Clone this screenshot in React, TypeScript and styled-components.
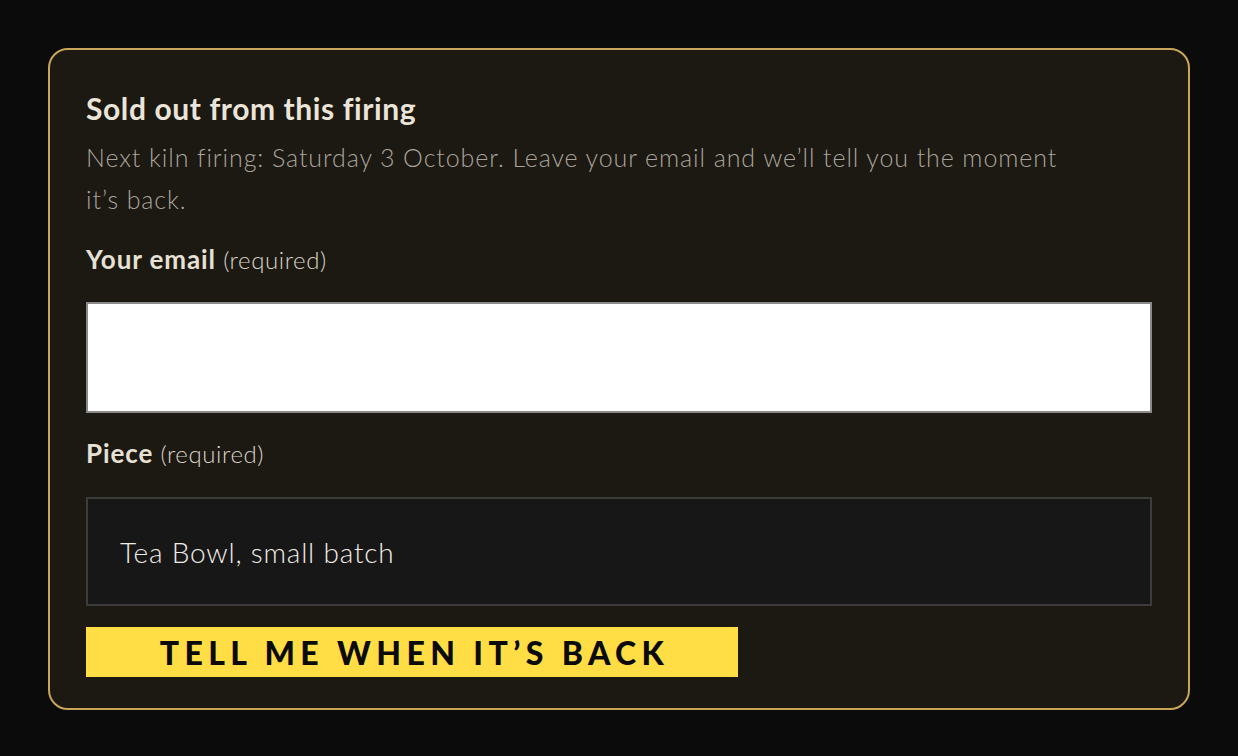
import styled, { createGlobalStyle } from 'styled-components'

const GlobalStyle = createGlobalStyle`
  html, body {
    margin: 0;
    background: #0b0b0b;
  }
  body {
    font-family: Lato, "Open Sans", sans-serif;
  }
`

const Page = styled.div`
  padding: 48px 48px;
  min-height: 756px;
  box-sizing: border-box;
`

const Card = styled.form`
  border: 2px solid #c9a65a;
  border-radius: 20px;
  background: #1c1812;
  padding: 40px 36px 31px;
  display: flex;
  flex-direction: column;
`

const Heading = styled.h2`
  margin: 0;
  font-size: 30px;
  line-height: 36px;
  font-weight: 700;
  letter-spacing: 0.6px;
  color: #ebe5d9;
`

const Lead = styled.p`
  margin: 10px 0 0;
  max-width: 1000px;
  font-size: 25px;
  line-height: 42px;
  font-weight: 300;
  letter-spacing: 0.9px;
  color: #a9a59c;
`

const Label = styled.label<{ $gap: number }>`
  display: block;
  margin-top: ${(p) => p.$gap}px;
  font-size: 26px;
  line-height: 32px;
  font-weight: 700;
  letter-spacing: 0.9px;
  color: #e6e0d5;

  span {
    font-weight: 300;
    font-size: 24px;
    letter-spacing: 0.6px;
    color: #d9d3c8;
  }
`

const EmailInput = styled.input`
  display: block;
  margin-top: 26px;
  width: 100%;
  height: 111px;
  box-sizing: border-box;
  background: #fff;
  border: 2px solid #8a8a8a;
  font: inherit;
  font-size: 24px;
  padding: 0 32px;
  outline: none;
`

const PieceBox = styled.div`
  margin-top: 27px;
  height: 109px;
  box-sizing: border-box;
  background: #171717;
  border: 2px solid #3c3c3c;
  display: flex;
  align-items: center;
  padding: 0 32px;
  font-size: 28px;
  font-weight: 300;
  letter-spacing: 0.8px;
  color: #f0ede6;
`

const Submit = styled.button`
  margin-top: 21px;
  width: 652px;
  height: 50px;
  border: none;
  background: #ffde45;
  color: #0b0b0b;
  font-family: Lato, sans-serif;
  font-size: 32px;
  font-weight: 900;
  letter-spacing: 5.4px;
  text-transform: uppercase;
  cursor: pointer;
  padding: 0 0 0 5px;
`

export default function App() {
  return (
    <Page>
      <GlobalStyle />
      <Card onSubmit={(e) => e.preventDefault()}>
        <Heading>Sold out from this firing</Heading>
        <Lead>
          Next kiln firing: Saturday 3 October. Leave your email and we’ll tell you the moment it’s back.
        </Lead>
        <Label $gap={23}>
          Your email <span>(required)</span>
        </Label>
        <EmailInput type="email" aria-label="Your email" />
        <Label $gap={24}>
          Piece <span>(required)</span>
        </Label>
        <PieceBox>Tea Bowl, small batch</PieceBox>
        <Submit type="submit">Tell me when it’s back</Submit>
      </Card>
    </Page>
  )
}
